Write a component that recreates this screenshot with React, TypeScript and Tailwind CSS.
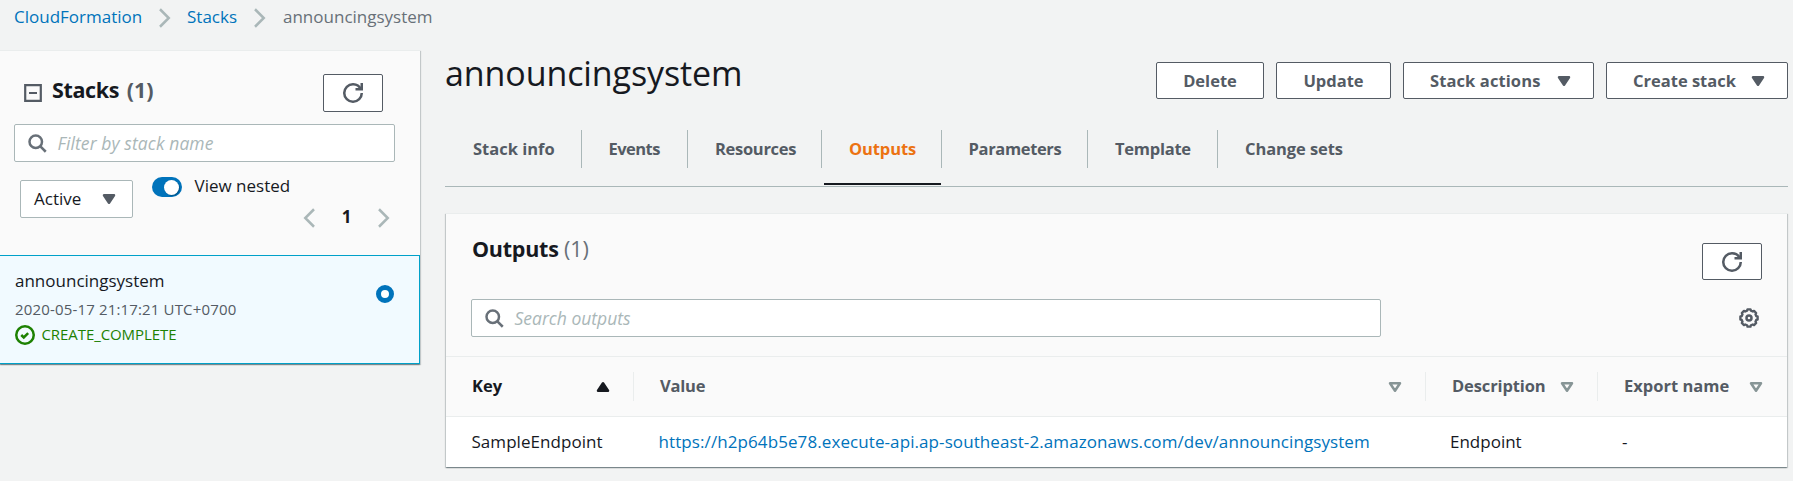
import type { ReactNode } from "react";
import { clsx } from "clsx";

function Icon({ children, className }: { children: ReactNode; className?: string }) {
  return (
    <svg
      viewBox="0 0 16 16"
      fill="none"
      stroke="currentColor"
      strokeWidth="2"
      className={clsx("size-5 shrink-0", className)}
    >
      {children}
    </svg>
  );
}

const ChevronRight = ({ className }: { className?: string }) => (
  <Icon className={clsx("text-[#aab7b8]", className)}>
    <path d="M4 1l7 7-7 7" />
  </Icon>
);

const ChevronLeft = ({ className }: { className?: string }) => (
  <Icon className={clsx("text-[#aab7b8]", className)}>
    <path d="M12 1L5 8l7 7" />
  </Icon>
);

const Refresh = () => (
  <Icon>
    <path d="M10 5h5V0" />
    <path d="M15 8a6.957 6.957 0 01-7 7 6.957 6.957 0 01-7-7 6.957 6.957 0 017-7 6.87 6.87 0 016.3 4" />
  </Icon>
);

const Search = () => (
  <Icon className="text-[#687078]">
    <circle cx="7" cy="7" r="5" />
    <path d="M15 15l-4.5-4.5" />
  </Icon>
);

const Caret = ({ up, hollow, className }: { up?: boolean; hollow?: boolean; className?: string }) => (
  <Icon className={className}>
    <path
      d={up ? "M4 11h8L8 5l-4 6z" : "M4 5h8l-4 6-4-6z"}
      fill={hollow ? "none" : "currentColor"}
      strokeLinejoin="round"
    />
  </Icon>
);

const gearPoints = Array.from({ length: 8 }, (_, i) =>
  [
    [-10, 7],
    [10, 7],
    [15, 6],
    [30, 6],
  ].map(([deg, r]) => {
    const a = ((i * 45 + deg) * Math.PI) / 180;
    return `${(8 + r * Math.sin(a)).toFixed(2)},${(8 - r * Math.cos(a)).toFixed(2)}`;
  }).join(" "),
).join(" ");

const Gear = () => (
  <Icon className="text-[#545b64]">
    <polygon points={gearPoints} strokeLinejoin="round" strokeWidth="1.9" />
    <circle cx="8" cy="8" r="2" />
  </Icon>
);

function Button({ children, className }: { children: ReactNode; className?: string }) {
  return (
    <button
      className={clsx(
        "flex shrink-0 items-center rounded-[2px] border border-[#545b64] bg-white text-[16.5px] leading-[34px] font-bold text-[#545b64]",
        className,
      )}
    >
      {children}
    </button>
  );
}

function SearchBox({ placeholder, className }: { placeholder: string; className?: string }) {
  return (
    <div
      className={clsx(
        "flex h-[38px] items-center gap-[10.5px] rounded-[2px] border border-[#aab7b8] bg-white pl-3 text-[17.5px] text-[#aab7b8] italic",
        className,
      )}
    >
      <Search />
      <span className="leading-[36px]">{placeholder}</span>
    </div>
  );
}

const tabs = [
  { label: "Stack info", box: "w-[137px] pl-[28px]" },
  { label: "Events", box: "w-[106px] pl-[26.5px] tracking-[-0.55px]" },
  { label: "Resources", box: "w-[134px] pl-[27px] tracking-[-0.3px]" },
  { label: "Outputs", box: "w-[120px] pl-[27px] tracking-[-0.1px]", active: true },
  { label: "Parameters", box: "w-[146px] pl-[26.5px] tracking-[-0.35px]" },
  { label: "Template", box: "w-[130px] pl-[27px] tracking-[-0.25px]" },
  { label: "Change sets", box: "w-[130px] pl-[27px] tracking-[-0.08px]" },
];

const cardShadow =
  "shadow-[0_1px_1px_0_rgba(0,28,36,0.3),1px_1px_1px_0_rgba(0,28,36,0.15),-1px_1px_1px_0_rgba(0,28,36,0.15)]";

function Sidebar() {
  return (
    <aside className={clsx("flex h-[314px] w-[420px] shrink-0 flex-col border-t border-[#eaeded] bg-[#fafafa]", cardShadow)}>
      <div className="flex h-[204px] flex-col pt-[23px] pl-[14px]">
        <div className="flex h-[38px]">
          <svg viewBox="0 0 18 18" fill="none" stroke="#545b64" strokeWidth="2.2" className="mt-[10px] ml-[10px] size-[18px]">
            <path d="M1.2 1.2h15.6v15.6H1.2zM5 9h8" />
          </svg>
          <h2 className="ml-[10px] w-[271px] text-[21.5px] leading-[31px] font-bold">
            <span className="mr-[2px] tracking-[-0.35px]">Stacks</span> <span className="text-[#545b64]">(1)</span>
          </h2>
          <Button className="h-[38px] w-[60px] justify-center">
            <Refresh />
          </Button>
        </div>
        <SearchBox placeholder="Filter by stack name" className="mt-3 w-[381px] tracking-[0.1px]" />
        <div className="mt-[15px] flex pl-[6px]">
          <button className="mt-[3px] flex h-[38px] w-[113px] items-center rounded-[2px] border border-[#aab7b8] bg-white pl-[13px] leading-[36px]">
            <span className="w-[65px] text-left">Active</span>
            <Caret className="text-[#545b64]" />
          </button>
          <div className="ml-[19px] w-[242px]">
            <div className="flex h-5">
              <span className="flex h-5 w-[30px] items-center justify-end rounded-full bg-[#0073bb] pr-[3px]">
                <span className="size-[15px] rounded-full bg-white shadow-[1px_1px_1px_rgba(0,0,0,0.25)]" />
              </span>
              <span className="ml-[12.5px] leading-[17px]">View nested</span>
            </div>
            <div className="mt-[11px] flex h-5 justify-end">
              <ChevronLeft />
              <span className="w-[55px] text-center leading-[17px] font-bold">1</span>
              <ChevronRight />
            </div>
          </div>
        </div>
      </div>
      <div className="flex h-[109px] justify-between border border-l-0 border-[#00a1c9] bg-[#f1faff] pt-3 pr-[25px] pl-[15px]">
        <div>
          <div className="h-6 leading-[25px]">announcingsystem</div>
          <div className="mt-[5px] h-6 text-[15px] leading-6 tracking-[0.16px] text-[#545b64]">2020-05-17 21:17:21 UTC+0700</div>
          <div className="mt-1 flex text-[#1d8102]">
            <Icon>
              <circle cx="8" cy="8" r="7" />
              <path d="M5 8l2 2 3.521-3.521" />
            </Icon>
            <span className="ml-[6.5px] text-[15px] leading-[19px] tracking-[-0.08px]">CREATE_COMPLETE</span>
          </div>
        </div>
        <span className="mt-[17px] size-[18px] rounded-full border-[5.5px] border-[#0073bb] bg-white" />
      </div>
    </aside>
  );
}

const columns = "grid grid-cols-[188px_792px_172px_189px]";

function HeaderCell({ label, className, last, children }: { label: string; className: string; last?: boolean; children: ReactNode }) {
  return (
    <div className={clsx("flex h-[29px] items-center justify-between pl-[26px]", !last && "border-r border-[#eaeded]", className)}>
      <span className="pb-[3px] text-[16.5px] leading-[25px] font-bold">{label}</span>
      {children}
    </div>
  );
}

function OutputsPanel() {
  return (
    <section className={clsx("mt-[26px] ml-px w-[1341px] border-t border-[#eaeded] bg-[#fafafa]", cardShadow)}>
      <div className="h-[142px] pt-[19px] pl-[25px]">
        <div className="flex h-[47px] justify-between pr-[25px]">
          <h2 className="pl-px text-[21.5px] leading-[32px] font-bold tracking-[-0.25px]">
            Outputs <span className="font-normal tracking-normal text-[#687078]">(1)</span>
          </h2>
          <Button className="mt-[10px] h-[37px] w-[60px] justify-center">
            <Refresh />
          </Button>
        </div>
        <div className="mt-[19px] flex items-center justify-between pr-[28px]">
          <SearchBox placeholder="Search outputs" className="w-[910px]" />
          <Gear />
        </div>
      </div>
      <div className={clsx(columns, "h-[61px] items-center border-y border-[#eaeded] text-[#545b64]")}>
        <HeaderCell label="Key" className="pr-[20px] text-[#16191f]">
          <Caret up />
        </HeaderCell>
        <HeaderCell label="Value" className="pr-[20px] tracking-[-0.2px]">
          <Caret hollow className="text-[#879596]" />
        </HeaderCell>
        <HeaderCell label="Description" className="pr-[20px] tracking-[-0.12px]">
          <Caret hollow className="text-[#879596]" />
        </HeaderCell>
        <HeaderCell label="Export name" className="pr-[21px]" last>
          <Caret hollow className="text-[#879596]" />
        </HeaderCell>
      </div>
      <div className={clsx(columns, "h-[50px] items-center bg-white pb-px")}>
        <span className="pl-[25.5px] tracking-[0.05px]">SampleEndpoint</span>
        <a className="pl-[24.5px] tracking-[0.09px] text-[#0073bb]">
          https://h2p64b5e78.execute-api.ap-southeast-2.amazonaws.com/dev/announcingsystem
        </a>
        <span className="pl-[24px]">Endpoint</span>
        <span className="pl-[24px]">-</span>
      </div>
    </section>
  );
}

export default function App() {
  return (
    <div className="h-[481px] w-[1793px] overflow-hidden bg-[#f2f3f3] font-['Open_Sans',sans-serif] text-[17px] text-[#16191f]">
      <nav className="flex h-[50px] items-start pl-[14px] leading-[33px] text-[#0073bb]">
        <span className="w-[141px]">CloudFormation</span>
        <ChevronRight className="mt-2" />
        <span className="ml-[12px] w-[63px]">Stacks</span>
        <ChevronRight className="mt-2" />
        <span className="ml-[13px] text-[#687078]">announcingsystem</span>
      </nav>
      <div className="flex">
        <Sidebar />
        <main className="ml-[25px] w-[1343px] pt-[2px]">
          <div className="flex h-[47px] justify-between">
            <h1 className="text-[34px] leading-[42px] tracking-[-0.1px]">announcingsystem</h1>
            <div className="flex gap-3 pt-[10px]">
              <Button className="h-[37px] w-[108px] justify-center">Delete</Button>
              <Button className="h-[37px] w-[115px] justify-center">Update</Button>
              <Button className="h-[37px] w-[191px] pl-[26px]">
                <span className="w-[124px] text-left tracking-[0.1px]">Stack actions</span>
                <Caret />
              </Button>
              <Button className="h-[37px] w-[182px] pl-[26px]">
                <span className="w-[115px] text-left">Create stack</span>
                <Caret />
              </Button>
            </div>
          </div>
          <div className="mt-[31px] flex h-[57px] border-b border-[#aab7b8] text-[16.5px] font-bold text-[#545b64]">
            {tabs.map((tab, i) => (
              <div key={tab.label}>
                <div
                  className={clsx(
                    "h-[38px] leading-[37px]",
                    tab.box,
                    i < tabs.length - 1 && "border-r border-[#aab7b8]",
                    tab.active && "text-[#ec7211]",
                  )}
                >
                  {tab.label}
                </div>
                {tab.active && <div className="mt-[15px] mr-px ml-[2px] h-[2px] bg-[#16191f]" />}
              </div>
            ))}
          </div>
          <OutputsPanel />
        </main>
      </div>
    </div>
  );
}
